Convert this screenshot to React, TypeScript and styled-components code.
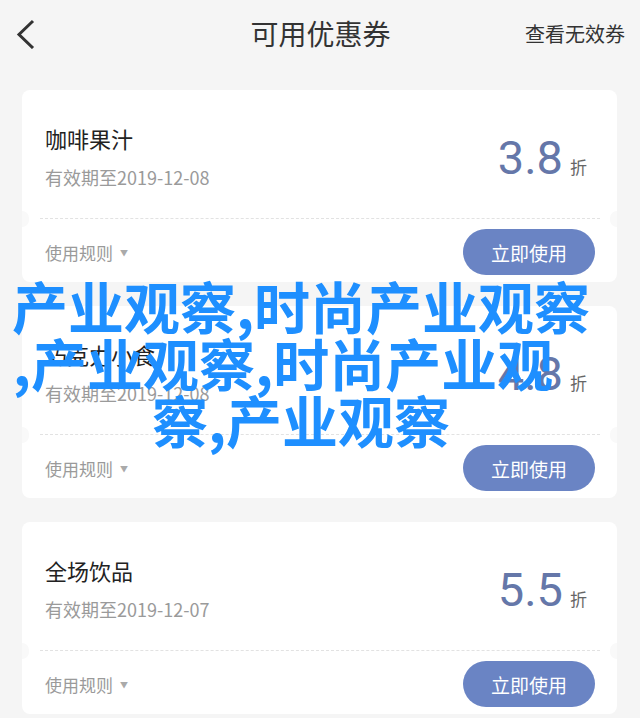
import * as React from "react";

import styled, { createGlobalStyle } from "styled-components";

type Coupon = {
  name: string;
  expires: string;
  discount: string;
};

const coupons: Coupon[] = [
  { name: "咖啡果汁", expires: "2019-12-08", discount: "3.8" },
  { name: "巧克力小食", expires: "2019-12-08", discount: "4.8" },
  { name: "全场饮品", expires: "2019-12-07", discount: "5.5" },
];

// the overlay caption, as it breaks in the screenshot
const watermark = [
  { text: "产业观察,时尚产业观察", shift: 0 },
  { text: ",产业观察,时尚产业观", shift: -18 },
  { text: "察,产业观察", shift: 0 },
];

const CJK = `"Noto Sans CJK SC", "Noto Sans", sans-serif`;

const GlobalStyle = createGlobalStyle`
  html, body {
    margin: 0;
    padding: 0;
    background: #f5f5f5;
    font-family: ${CJK};
  }
`;

class App extends React.Component {
  public render() {
    return (
      <Page>
        <GlobalStyle />
        <Header>
          <BackButton aria-label="back">
            <svg width="20" height="30" viewBox="0 0 20 30">
              <polyline
                points="17,2 3,15.5 17,29"
                fill="none"
                stroke="#333"
                strokeWidth="3"
                strokeLinejoin="miter"
              />
            </svg>
          </BackButton>
          <Title>可用优惠券</Title>
          <HeaderLink>查看无效券</HeaderLink>
        </Header>
        <List>
          {coupons.map((c) => (
            <Card key={c.name}>
              <CardTop>
                <Info>
                  <Name>{c.name}</Name>
                  <Expiry>有效期至{c.expires}</Expiry>
                </Info>
                <Price>
                  <Amount>{c.discount}</Amount>
                  <Unit>折</Unit>
                </Price>
              </CardTop>
              <Divider />
              <CardBottom>
                <Rules>
                  使用规则<Caret>▼</Caret>
                </Rules>
                <UseButton>立即使用</UseButton>
              </CardBottom>
            </Card>
          ))}
        </List>
        <Watermark>
          {watermark.map((l) => (
            <WatermarkLine key={l.text} $shift={l.shift}>
              {l.text}
            </WatermarkLine>
          ))}
        </Watermark>
      </Page>
    );
  }
}

const Page = styled.div`
  position: relative;
  width: 640px;
  height: 718px;
  overflow: hidden;
  background: #f5f5f5;
`;

const Header = styled.div`
  display: grid;
  grid-template-columns: 1fr auto 1fr;
  align-items: center;
  height: 66px;
  padding: 0 15px 0 16px;
`;

const BackButton = styled.div`
  display: flex;
  align-items: center;
  padding-top: 2px;
`;

const Title = styled.div`
  font-size: 28px;
  color: #333;
  line-height: 1;
`;

const HeaderLink = styled.div`
  justify-self: end;
  font-size: 20px;
  color: #333;
`;

const List = styled.div`
  display: flex;
  flex-direction: column;
  gap: 24px;
  padding: 24px 23px 0 22px;
`;

const Card = styled.div`
  background: #fff;
  border-radius: 8px;
  height: 192px;
  display: flex;
  flex-direction: column;
`;

const CardTop = styled.div`
  display: flex;
  align-items: center;
  justify-content: space-between;
  height: 128px;
  padding: 0 30px 0 23px;
  box-sizing: border-box;
`;

const Info = styled.div`
  display: flex;
  flex-direction: column;
  gap: 13px;
  padding-top: 4px;
`;

const Name = styled.div`
  font-size: 22px;
  line-height: 28px;
  color: #222;
`;

const Expiry = styled.div`
  font-size: 18px;
  line-height: 24px;
  color: #9a9a9a;
`;

const Price = styled.div`
  display: flex;
  align-items: baseline;
  gap: 7px;
  padding-top: 6px;
`;

const Amount = styled.span`
  font-family: Roboto, "Liberation Sans", sans-serif;
  font-size: 47px;
  color: #6577a9;
  line-height: 1;
`;

const Unit = styled.span`
  font-size: 17px;
  color: #666;
`;

const Divider = styled.div`
  position: relative;
  margin: 0 17px 0 18px;
  border-top: 1px dashed #e2e2e2;

  &::before,
  &::after {
    content: "";
    position: absolute;
    top: -8px;
    width: 7px;
    height: 16px;
    background: #f9f9f9;
  }
  &::before {
    left: -18px;
    border-radius: 0 8px 8px 0;
  }
  &::after {
    right: -17px;
    border-radius: 8px 0 0 8px;
  }
`;

const CardBottom = styled.div`
  flex: 1;
  display: flex;
  align-items: center;
  justify-content: space-between;
  padding: 3px 22px 0 23px;
`;

const Rules = styled.div`
  display: flex;
  align-items: center;
  gap: 7px;
  font-size: 17px;
  color: #9a9a9a;
`;

const Caret = styled.span`
  font-size: 8px;
  color: #aaa;
`;

const UseButton = styled.button`
  width: 132px;
  height: 46px;
  border: none;
  border-radius: 23px;
  background: #6a84c4;
  color: #fff;
  font-family: ${CJK};
  font-size: 19px;
  cursor: pointer;
`;

const Watermark = styled.div`
  position: absolute;
  left: 0;
  top: 276px;
  width: 602px;
  display: flex;
  flex-direction: column;
  align-items: center;
  font-size: 56px;
  line-height: 57px;
  font-weight: 700;
  color: #1e8fff;
`;

const WatermarkLine = styled.div<{ $shift: number }>`
  white-space: nowrap;
  transform: translateX(${(p) => p.$shift}px);
`;

export default App;
